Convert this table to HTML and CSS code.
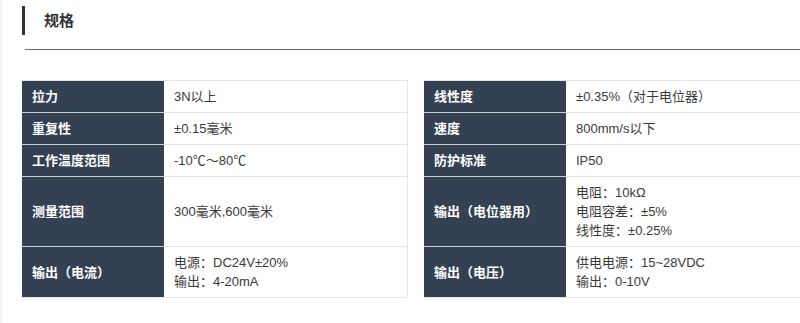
FILE: index.html
```html
<!DOCTYPE html>
<html lang="zh">
<head>
<meta charset="utf-8">
<link rel="stylesheet" href="styles.css">
</head>
<body>
<div class="page">
  <div class="title-row">
    <span class="title-bar"></span>
    <h2 class="title">规格</h2>
  </div>
  <div class="rule"></div>
  <div class="specs">
    <div class="spec-row">
      <div class="pair"><div class="key">拉力</div><div class="val">3N以上</div></div>
      <div class="pair"><div class="key">线性度</div><div class="val">±0.35%（对于电位器）</div></div>
    </div>
    <div class="spec-row">
      <div class="pair"><div class="key">重复性</div><div class="val">±0.15毫米</div></div>
      <div class="pair"><div class="key">速度</div><div class="val">800mm/s以下</div></div>
    </div>
    <div class="spec-row">
      <div class="pair"><div class="key">工作温度范围</div><div class="val">-10℃～80℃</div></div>
      <div class="pair"><div class="key">防护标准</div><div class="val">IP50</div></div>
    </div>
    <div class="spec-row">
      <div class="pair"><div class="key">测量范围</div><div class="val">300毫米,600毫米</div></div>
      <div class="pair"><div class="key">输出（电位器用）</div><div class="val">电阻：10kΩ<br>电阻容差：±5%<br>线性度：±0.25%</div></div>
    </div>
    <div class="spec-row">
      <div class="pair"><div class="key">输出（电流）</div><div class="val">电源：DC24V±20%<br>输出：4-20mA</div></div>
      <div class="pair"><div class="key">输出（电压）</div><div class="val">供电电源：15~28VDC<br>输出：0-10V</div></div>
    </div>
  </div>
</div>
</body>
</html>
```

FILE: styles.css
```css
html, body {
  margin: 0;
  padding: 0;
  background: #ffffff;
  overflow: hidden;
}
body {
  font-family: "Liberation Sans", "Noto Sans CJK SC", sans-serif;
  font-size: 13px;
  color: #333333;
  border-left: 2px solid #f4f4f4;
  width: 900px;
  min-height: 100vh;
}
.page {
  padding: 6px 0 0 20px;
}
.title-row {
  display: flex;
  align-items: center;
  height: 29px;
}
.title-bar {
  width: 3px;
  height: 29px;
  background: #3a3030;
}
.title {
  margin: 0 0 0 19px;
  font-size: 15px;
  font-weight: bold;
  color: #333333;
  line-height: 29px;
}
.rule {
  margin: 14px 0 0 3px;
  height: 1px;
  background: #6f6f6f;
}
.specs {
  margin-top: 30px;
  width: 788px;
}
.spec-row {
  display: grid;
  grid-template-columns: 386px 386px;
  column-gap: 16px;
}
.spec-row:first-child .pair {
  border-top: 1px solid #e6e6e6;
}
.pair {
  display: grid;
  grid-template-columns: 142px 1fr;
  border-right: 1px solid #e6e6e6;
}
.key, .val {
  display: flex;
  align-items: center;
  padding: 6px 10px;
  line-height: 19px;
  border-bottom: 1px solid #e6e6e6;
}
.key {
  background: #334152;
  color: #ffffff;
  font-weight: bold;
  border-bottom-color: #c9ced4;
}
.spec-row:last-child .key {
  border-bottom-color: #e6e6e6;
}
.val {
  color: #3a3a3a;
}
```
